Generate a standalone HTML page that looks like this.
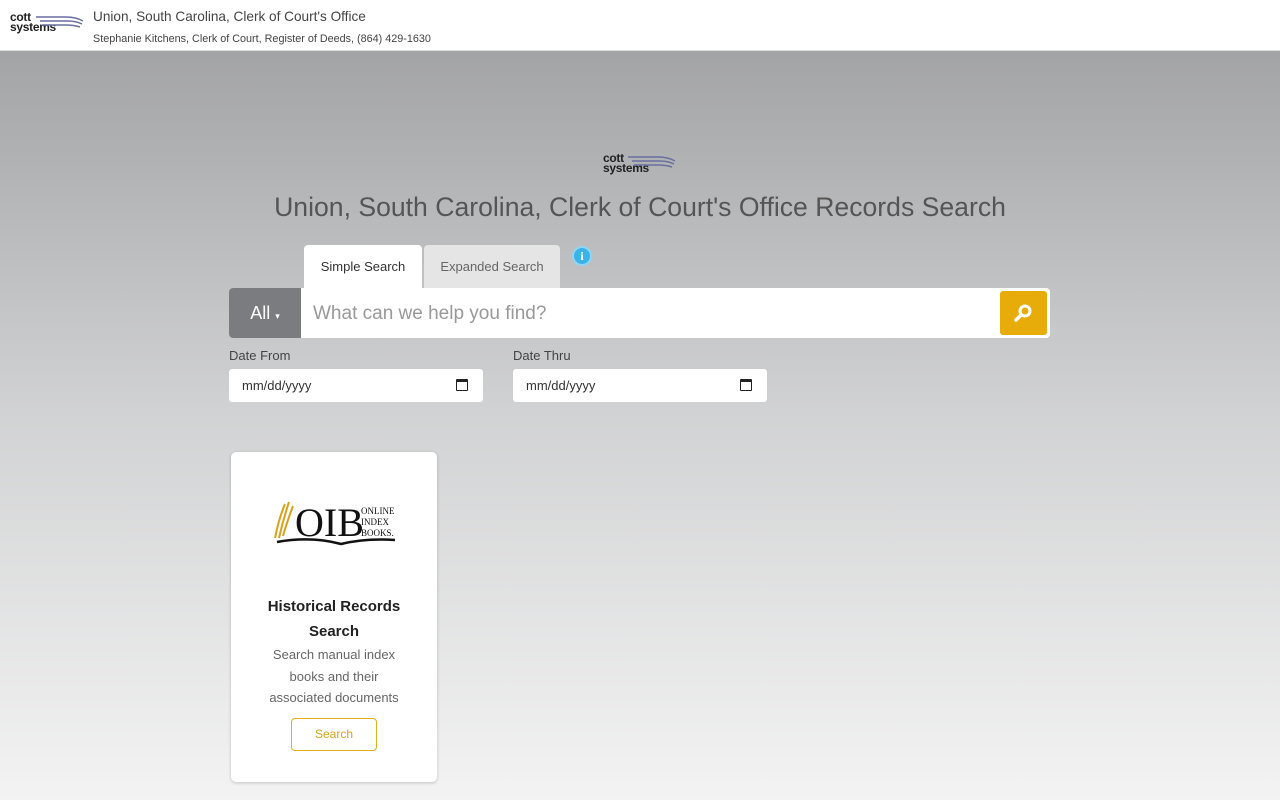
<!DOCTYPE html>
<html><head><meta charset="utf-8"><style>
*{box-sizing:border-box;margin:0;padding:0}
body{width:1280px;height:800px;overflow:hidden;font-family:"Segoe UI","Liberation Sans",sans-serif;background:linear-gradient(#a3a4a6 0px,#a3a4a6 52px,#d2d3d4 420px,#f3f3f3 800px)}
.hdr{position:absolute;left:0;top:0;width:1280px;height:51px;background:#fff;border-bottom:1px solid #ddd}
.logo{font-family:"Liberation Sans",sans-serif;font-weight:900;color:#222;line-height:10px;font-size:12px;letter-spacing:-0.3px}
.t1{position:absolute;left:93px;top:9px;font-size:13.6px;color:#444}
.t2{position:absolute;left:93px;top:33px;font-size:10.8px;color:#444}
h1{position:absolute;left:0;width:1280px;top:192px;text-align:center;font-weight:normal;font-size:26.6px;color:#555}
.tab{position:absolute;top:245px;height:43px;border-radius:4px 4px 0 0;font-size:13px;text-align:center;line-height:43px}
.bar{position:absolute;left:229px;top:288px;width:821px;height:50px;border-radius:4px;background:#fff;overflow:hidden}
.all{position:absolute;left:0;top:0;width:72px;height:50px;background:#7b7c7f;color:#fff;font-size:18px;line-height:50px;text-align:center}
.ph{position:absolute;left:84px;top:1px;line-height:50px;font-size:19px;color:#999}
.go{position:absolute;right:3px;top:3px;width:47px;height:44px;background:#e8ac0a;border-radius:3px}
.lbl{position:absolute;top:348px;font-size:13px;color:#444}
.date{position:absolute;top:369px;width:254px;height:33px;background:#fff;border-radius:3px;font-size:13px;color:#333;padding-left:13px;line-height:33px}
.cal{position:absolute;right:15px;top:10px;width:12px;height:12px;border:1.5px solid #222;border-top-width:3px;border-radius:1px}
.card{position:absolute;left:231px;top:452px;width:206px;height:330px;background:#fff;border-radius:5px;box-shadow:0 1px 3px rgba(0,0,0,.2);text-align:center}
</style></head><body>
<div class="hdr">
 <div class="logo" style="position:absolute;left:10px;top:12px">cott<br>systems</div>
 <svg style="position:absolute;left:36px;top:13px" width="48" height="18"><path d="M0 4 H30 Q40 4 47 8 M4 8 H32 Q40 8 46 11 M6 12 H30 Q38 12 44 14" stroke="#6a6fa0" stroke-width="1.5" fill="none"/></svg>
 <div class="t1">Union, South Carolina, Clerk of Court's Office</div>
 <div class="t2">Stephanie Kitchens, Clerk of Court, Register of Deeds, (864) 429-1630</div>
</div>
<div class="logo" style="position:absolute;left:603px;top:153px">cott<br>systems</div>
<svg style="position:absolute;left:628px;top:153px" width="50" height="18"><path d="M0 4 H30 Q40 4 47 8 M4 8 H32 Q40 8 46 11 M6 12 H30 Q38 12 44 14" stroke="#6a6fa0" stroke-width="1.5" fill="none"/></svg>
<h1>Union, South Carolina, Clerk of Court's Office Records Search</h1>
<div class="tab" style="left:304px;width:118px;background:#fff;color:#333">Simple Search</div>
<div class="tab" style="left:424px;width:136px;background:#e5e5e5;color:#666">Expanded Search</div>
<div style="position:absolute;left:572px;top:246px;width:20px;height:20px;border-radius:50%;background:#3ab3e8;border:2px solid #8fd6f3;color:#fff;font:bold 12px 'Liberation Serif',serif;text-align:center;line-height:16px">i</div>
<div class="bar"><div class="all">All <span style="font-size:9px">▾</span></div><div class="ph">What can we help you find?</div>
<div class="go"><svg width="47" height="44"><circle cx="25" cy="20" r="5" stroke="#fff" stroke-width="3" fill="none"/><path d="M21 24 L16 29" stroke="#fff" stroke-width="3.5" stroke-linecap="round"/></svg></div></div>
<div class="lbl" style="left:229px">Date From</div><div class="lbl" style="left:513px">Date Thru</div>
<div class="date" style="left:229px">mm/dd/yyyy<div class="cal"></div></div>
<div class="date" style="left:513px">mm/dd/yyyy<div class="cal"></div></div>
<div class="card">
 <svg style="position:absolute;left:40px;top:46px" width="128" height="50"><path d="M4 40 Q8 20 14 6 M8 40 Q12 22 18 4 M12 38 Q16 24 22 8" stroke="#d9a21b" stroke-width="2" fill="none"/><path d="M6 44 Q40 38 70 46 Q95 40 124 42" stroke="#111" stroke-width="2.5" fill="none"/>
 <text x="24" y="38" font-family="Liberation Serif" font-size="40" fill="#111">OIB</text>
 <text x="90" y="16" font-family="Liberation Serif" font-size="9" fill="#111">ONLINE</text><text x="90" y="27" font-family="Liberation Serif" font-size="9" fill="#111">INDEX</text><text x="90" y="38" font-family="Liberation Serif" font-size="9" fill="#111">BOOKS.</text></svg>
 <div style="position:absolute;top:142px;width:206px;font-weight:bold;font-size:15px;color:#222;line-height:25px">Historical Records<br>Search</div>
 <div style="position:absolute;top:192px;width:206px;font-size:13px;color:#666;line-height:21.5px">Search manual index<br>books and their<br>associated documents</div>
 <div style="position:absolute;left:60px;top:266px;width:86px;height:33px;border:1px solid #e0b020;border-radius:4px;color:#d9a21b;font-size:12px;line-height:31px">Search</div>
</div>
</body></html>
